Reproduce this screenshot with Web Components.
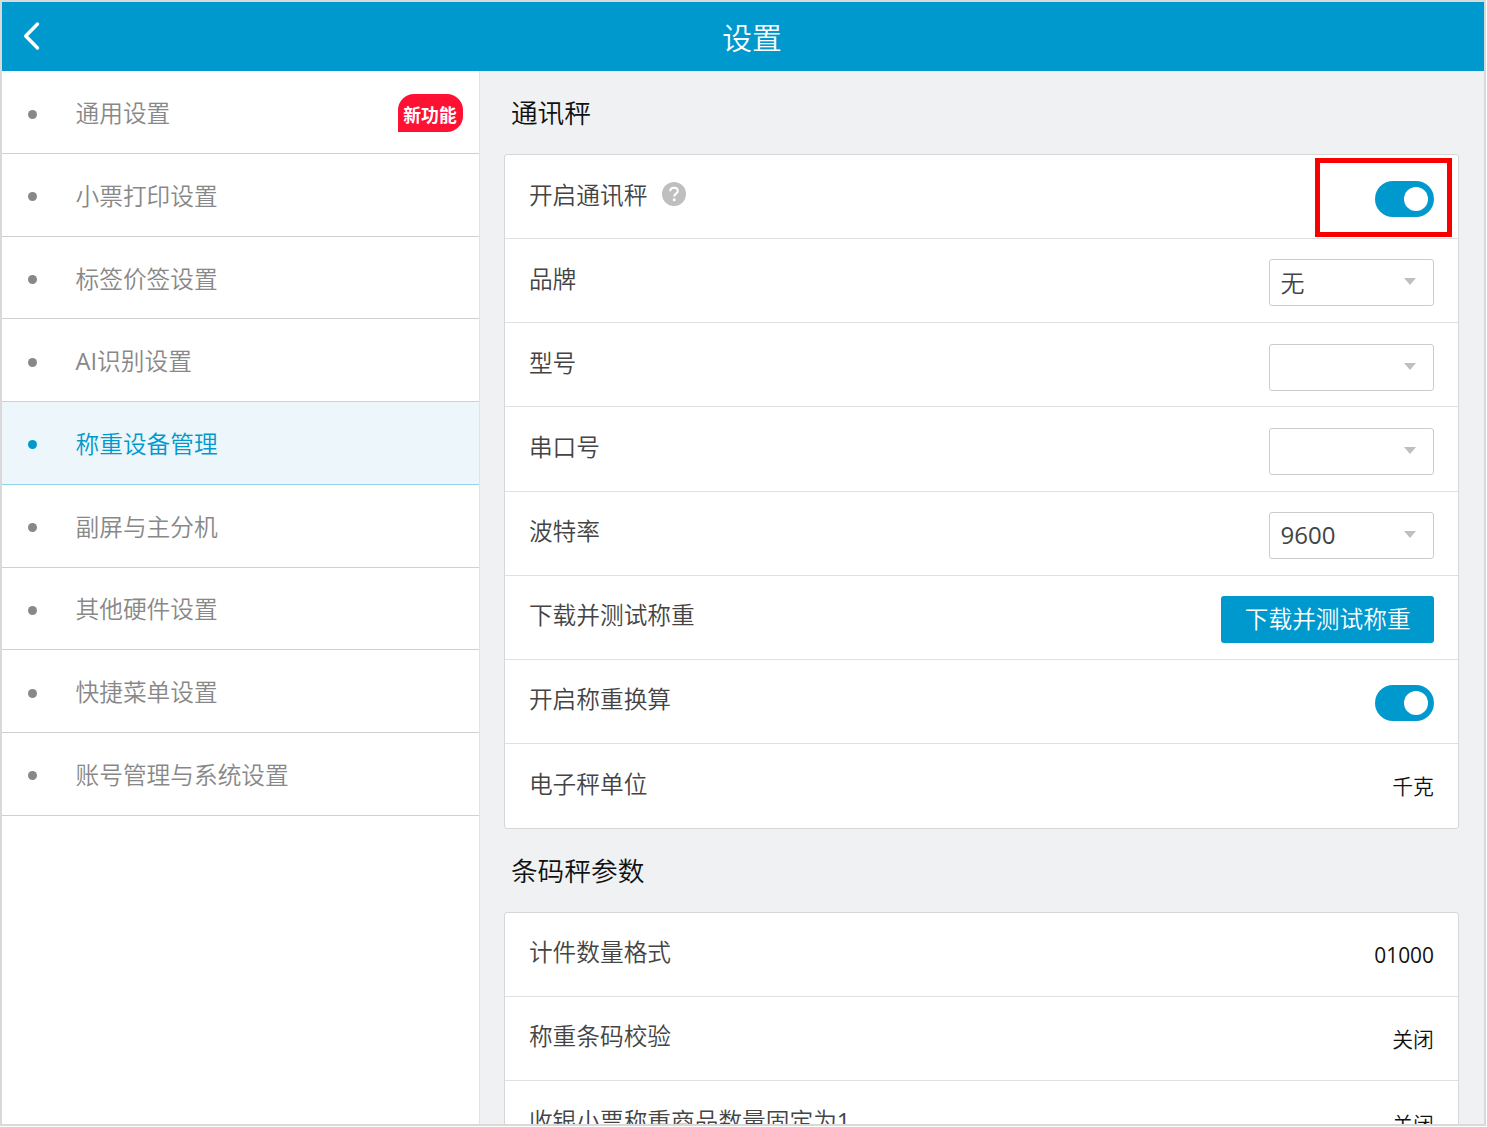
<!DOCTYPE html>
<html lang="zh-CN">
<head>
<meta charset="utf-8">
<title>设置</title>
<style>
  body {
    margin: 0;
    background: #fff;
    font-family: "Open Sans", "Noto Sans CJK SC DemiLight", "Noto Sans CJK SC", sans-serif;
    font-weight: 400;
  }
</style>
</head>
<body>
<settings-page>
  <page-header slot="header">设置</page-header>
  <side-item slot="nav">通用设置<new-badge slot="badge">新功能</new-badge></side-item>
  <side-item slot="nav">小票打印设置</side-item>
  <side-item slot="nav">标签价签设置</side-item>
  <side-item slot="nav">AI识别设置</side-item>
  <side-item slot="nav" active>称重设备管理</side-item>
  <side-item slot="nav">副屏与主分机</side-item>
  <side-item slot="nav">其他硬件设置</side-item>
  <side-item slot="nav">快捷菜单设置</side-item>
  <side-item slot="nav">账号管理与系统设置</side-item>

  <setting-group heading="通讯秤">
    <setting-row label="开启通讯秤">
      <help-icon slot="help"></help-icon>
      <toggle-switch highlight></toggle-switch>
    </setting-row>
    <setting-row label="品牌"><select-box>无</select-box></setting-row>
    <setting-row label="型号"><select-box></select-box></setting-row>
    <setting-row label="串口号"><select-box></select-box></setting-row>
    <setting-row label="波特率"><select-box>9600</select-box></setting-row>
    <setting-row label="下载并测试称重"><action-button>下载并测试称重</action-button></setting-row>
    <setting-row label="开启称重换算"><toggle-switch></toggle-switch></setting-row>
    <setting-row label="电子秤单位"><row-value>千克</row-value></setting-row>
  </setting-group>
  <setting-group heading="条码秤参数">
    <setting-row label="计件数量格式"><row-value>01000</row-value></setting-row>
    <setting-row label="称重条码校验"><row-value>关闭</row-value></setting-row>
    <setting-row label="收银小票称重商品数量固定为1"><row-value>关闭</row-value></setting-row>
  </setting-group>
</settings-page>

<script>
class SettingsPage extends HTMLElement {
  constructor() {
    super();
    this.attachShadow({ mode: 'open' });
    this.shadowRoot.innerHTML = /* html */ `
    <style>
      :host {
        display: flex;
        flex-direction: column;
        box-sizing: border-box;
        width: 1486px;
        height: 1126px;
        border: 2px solid #d9d9d9;
        overflow: hidden;
        background: #eff1f3;
      }
      .body {
        display: flex;
        flex: 1;
        min-height: 0;
      }
      nav {
        flex: none;
        box-sizing: border-box;
        width: 478px;
        border-right: 1px solid #e2e3e5;
        background: #fff;
      }
      main {
        flex: 1;
        min-width: 0;
        padding: 0 25px 0 24.4px;
        overflow: hidden;
      }
    </style>
    <slot name="header"></slot>
    <div class="body">
      <nav><slot name="nav"></slot></nav>
      <main><slot></slot></main>
    </div>
    `;
  }
}
customElements.define('settings-page', SettingsPage);

class PageHeader extends HTMLElement {
  constructor() {
    super();
    this.attachShadow({ mode: 'open' });
    this.shadowRoot.innerHTML = /* html */ `
    <style>
      :host {
        display: grid;
        grid-template-columns: 60px 1fr 60px;
        align-items: center;
        flex: none;
        box-sizing: border-box;
        height: 69.4px;
        color: #fff;
        background: #0099ce;
      }
      svg {
        display: block;
        margin: 0 0 1px 20px;
      }
      h1 {
        margin: 0 0 0 18px;
        text-align: center;
        font-size: 29.8px;
        font-weight: inherit;
        line-height: 40px;
        padding-top: 3px;
      }
    </style>
    <svg width="20" height="30" viewBox="0 0 20 30" fill="none" stroke="#fff" stroke-width="3.4" stroke-linecap="round" stroke-linejoin="round">
      <path d="M15.5 3 3.7 15l11.8 12"/>
    </svg>
    <h1><slot></slot></h1>
    `;
  }
}
customElements.define('page-header', PageHeader);

class SideItem extends HTMLElement {
  constructor() {
    super();
    this.attachShadow({ mode: 'open' });
    this.shadowRoot.innerHTML = /* html */ `
    <style>
      :host {
        display: flex;
        align-items: center;
        box-sizing: border-box;
        width: 476.5px;
        height: 82.7px;
        padding: 0 16px 0 26px;
        border-bottom: 1.5px solid #d0d0d0;
        color: #888;
        font-size: 23.7px;
        line-height: 34px;
      }
      :host([active]) {
        color: #0099ce;
        background: #edf6fa;
        border-bottom-color: #93d4ec;
      }
      i {
        width: 9px;
        height: 9px;
        margin: 4px 38.5px 0 0;
        border-radius: 50%;
        background: currentColor;
      }
      span {
        flex: 1;
        padding-top: 2px;
      }
    </style>
    <i></i>
    <span><slot></slot></span>
    <slot name="badge"></slot>
    `;
  }
}
customElements.define('side-item', SideItem);

class NewBadge extends HTMLElement {
  constructor() {
    super();
    this.attachShadow({ mode: 'open' });
    this.shadowRoot.innerHTML = /* html */ `
    <style>
      :host {
        display: flex;
        align-items: center;
        justify-content: center;
        box-sizing: border-box;
        width: 65px;
        height: 38.5px;
        margin-top: 2px;
        padding-top: 1px;
        border-radius: 16px 16px 16px 0;
        color: #fff;
        background: #ff1133;
        font-family: "Noto Sans CJK SC", sans-serif;
        font-size: 17.8px;
        font-weight: 700;
        line-height: 24px;
      }
    </style>
    <slot></slot>
    `;
  }
}
customElements.define('new-badge', NewBadge);

class SettingGroup extends HTMLElement {
  constructor() {
    super();
    this.attachShadow({ mode: 'open' });
    this.shadowRoot.innerHTML = /* html */ `
    <style>
      :host {
        display: block;
      }
      h2 {
        display: flex;
        align-items: center;
        box-sizing: border-box;
        height: 82.8px;
        margin: 0;
        padding: 1px 0 0 6.5px;
        color: #111;
        font-size: 26.7px;
        font-weight: inherit;
        line-height: 36px;
      }
      .card {
        border: 1.5px solid #d5d7d9;
        border-radius: 3px;
        background: #fff;
      }
    </style>
    <h2></h2>
    <div class="card"><slot></slot></div>
    `;
    this.shadowRoot.querySelector('h2').textContent = this.getAttribute('heading');
  }
}
customElements.define('setting-group', SettingGroup);

class SettingRow extends HTMLElement {
  constructor() {
    super();
    this.attachShadow({ mode: 'open' });
    this.shadowRoot.innerHTML = /* html */ `
    <style>
      :host {
        display: flex;
        align-items: center;
        box-sizing: border-box;
        height: 84.1px;
        padding: 0 24px 0 23.5px;
        border-bottom: 1.5px solid #dfe0e1;
      }
      :host(:last-of-type) {
        border-bottom: 0;
      }
      .label {
        display: flex;
        align-items: center;
        flex: 1;
        gap: 15px;
        padding-bottom: 4px;
        color: #444;
        font-size: 23.7px;
        line-height: 34px;
      }
      .value {
        padding-top: 4.2px;
      }
    </style>
    <div class="label"><span></span><slot name="help"></slot></div>
    <div class="value"><slot></slot></div>
    `;
    this.shadowRoot.querySelector('.label span').textContent = this.getAttribute('label');
  }
}
customElements.define('setting-row', SettingRow);

class RowValue extends HTMLElement {
  constructor() {
    super();
    this.attachShadow({ mode: 'open' });
    this.shadowRoot.innerHTML = /* html */ `
    <style>
      :host {
        display: block;
        padding-bottom: 3px;
        color: #111;
        font-size: 20.9px;
        line-height: 30px;
      }
    </style>
    <slot></slot>
    `;
  }
}
customElements.define('row-value', RowValue);

class HelpIcon extends HTMLElement {
  constructor() {
    super();
    this.attachShadow({ mode: 'open' });
    this.shadowRoot.innerHTML = /* html */ `
    <style>
      :host {
        display: block;
        width: 24px;
        height: 24px;
        margin-bottom: 1px;
      }
      svg {
        display: block;
      }
    </style>
    <svg width="24" height="24" viewBox="0 0 24 24" fill="none">
      <circle cx="12" cy="12" r="12" fill="#bfbfbf"/>
      <path d="M8.2 9.3c0-2.4 1.6-3.6 3.8-3.6s3.8 1.2 3.8 3.3c0 2.6-3.6 2.6-3.6 5.4" stroke="#fff" stroke-width="2"/>
      <circle cx="12.2" cy="17.8" r="1.5" fill="#fff"/>
    </svg>
    `;
  }
}
customElements.define('help-icon', HelpIcon);

class ToggleSwitch extends HTMLElement {
  constructor() {
    super();
    this.attachShadow({ mode: 'open' });
    this.shadowRoot.innerHTML = /* html */ `
    <style>
      :host {
        display: flex;
        align-items: center;
        justify-content: flex-end;
        position: relative;
        box-sizing: border-box;
        width: 59px;
        height: 36px;
        padding-right: 6px;
        border-radius: 18px;
        background: #0099ce;
      }
      .knob {
        width: 24px;
        height: 24px;
        border-radius: 50%;
        background: #fff;
      }
      /* callout frame drawn over the row */
      :host([highlight])::after {
        content: "";
        position: absolute;
        box-sizing: border-box;
        top: -23px;
        right: -18px;
        width: 137px;
        height: 79px;
        border: 5px solid #f90000;
      }
    </style>
    <div class="knob"></div>
    `;
  }
}
customElements.define('toggle-switch', ToggleSwitch);

class SelectBox extends HTMLElement {
  constructor() {
    super();
    this.attachShadow({ mode: 'open' });
    this.shadowRoot.innerHTML = /* html */ `
    <style>
      :host {
        display: flex;
        align-items: center;
        justify-content: space-between;
        box-sizing: border-box;
        width: 165px;
        height: 47px;
        padding: 0 17px 0 10.5px;
        border: 1.5px solid #cbcbcb;
        border-radius: 3px;
        color: #444;
        background: #fff;
        font-size: 24px;
        line-height: 34px;
      }
      svg {
        display: block;
        margin-bottom: 2px;
      }
    </style>
    <span><slot></slot></span>
    <svg width="12" height="7" viewBox="0 0 12 7"><path d="M0 0h12L6 7z" fill="#bfbfbf"/></svg>
    `;
  }
}
customElements.define('select-box', SelectBox);

class ActionButton extends HTMLElement {
  constructor() {
    super();
    this.attachShadow({ mode: 'open' });
    this.shadowRoot.innerHTML = /* html */ `
    <style>
      :host {
        display: block;
      }
      button {
        display: block;
        width: 212.6px;
        height: 47px;
        padding: 0;
        border: 0;
        border-radius: 3px;
        color: #fff;
        background: #0099ce;
        font: inherit;
        font-size: 23.7px;
        line-height: 34px;
      }
    </style>
    <button><slot></slot></button>
    `;
  }
}
customElements.define('action-button', ActionButton);
</script>
</body>
</html>
